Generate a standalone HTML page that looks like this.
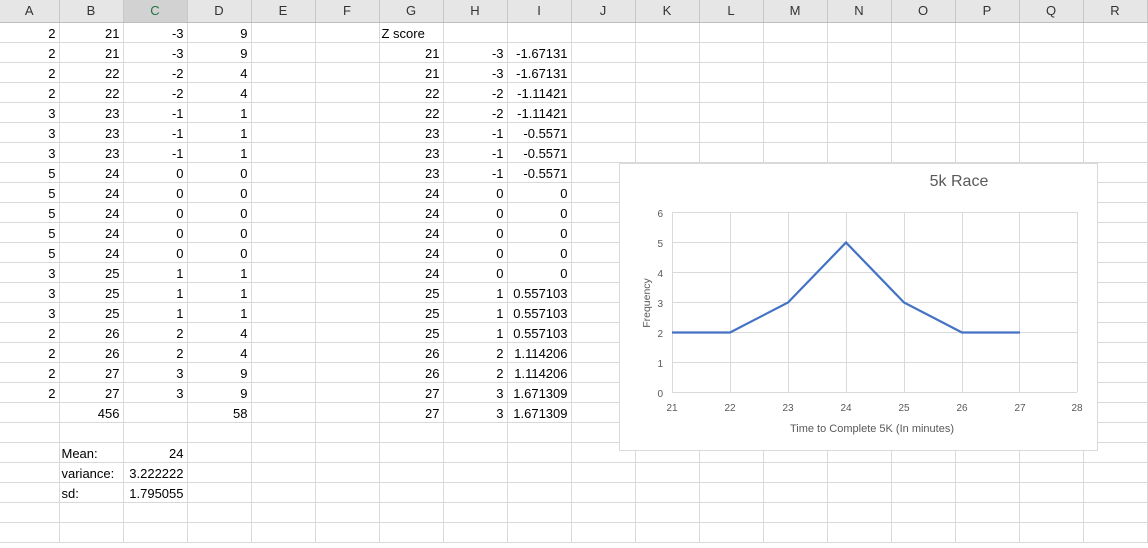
<!DOCTYPE html>
<html><head><meta charset="utf-8"><style>
body{margin:0;width:1148px;height:548px;overflow:hidden;background:#fff;font-family:"Liberation Sans",sans-serif;font-size:13px;color:#000}
table{border-collapse:collapse;table-layout:fixed;position:absolute;left:0;top:0}
td{height:17px;padding:2px 3px 0 2px;border-right:1px solid #d9d9d9;border-bottom:1px solid #d9d9d9;text-align:right;white-space:nowrap;overflow:hidden;line-height:17px}
tr.h td{height:22px;padding:0;background:#e6e6e6;text-align:center;color:#333;border-right:1px solid #c8c8c8;border-bottom:1px solid #bdbdbd;font-size:13px;line-height:22px}
tr.h td.s{background:#d2d2d2;color:#217346}
td.l{text-align:left}
#chart{position:absolute;left:619px;top:163px;width:479px;height:288px;background:#fff;border:1px solid #d9d9d9;box-sizing:border-box}
</style></head><body>
<table>
<colgroup><col style="width:59px"><col span="17" style="width:64px"></colgroup>
<tr class="h"><td>A</td><td>B</td><td class="s">C</td><td>D</td><td>E</td><td>F</td><td>G</td><td>H</td><td>I</td><td>J</td><td>K</td><td>L</td><td>M</td><td>N</td><td>O</td><td>P</td><td>Q</td><td>R</td></tr>
<tr><td>2</td><td>21</td><td>-3</td><td>9</td><td></td><td></td><td class="l">Z score</td><td></td><td></td><td></td><td></td><td></td><td></td><td></td><td></td><td></td><td></td><td></td></tr>
<tr><td>2</td><td>21</td><td>-3</td><td>9</td><td></td><td></td><td>21</td><td>-3</td><td>-1.67131</td><td></td><td></td><td></td><td></td><td></td><td></td><td></td><td></td><td></td></tr>
<tr><td>2</td><td>22</td><td>-2</td><td>4</td><td></td><td></td><td>21</td><td>-3</td><td>-1.67131</td><td></td><td></td><td></td><td></td><td></td><td></td><td></td><td></td><td></td></tr>
<tr><td>2</td><td>22</td><td>-2</td><td>4</td><td></td><td></td><td>22</td><td>-2</td><td>-1.11421</td><td></td><td></td><td></td><td></td><td></td><td></td><td></td><td></td><td></td></tr>
<tr><td>3</td><td>23</td><td>-1</td><td>1</td><td></td><td></td><td>22</td><td>-2</td><td>-1.11421</td><td></td><td></td><td></td><td></td><td></td><td></td><td></td><td></td><td></td></tr>
<tr><td>3</td><td>23</td><td>-1</td><td>1</td><td></td><td></td><td>23</td><td>-1</td><td>-0.5571</td><td></td><td></td><td></td><td></td><td></td><td></td><td></td><td></td><td></td></tr>
<tr><td>3</td><td>23</td><td>-1</td><td>1</td><td></td><td></td><td>23</td><td>-1</td><td>-0.5571</td><td></td><td></td><td></td><td></td><td></td><td></td><td></td><td></td><td></td></tr>
<tr><td>5</td><td>24</td><td>0</td><td>0</td><td></td><td></td><td>23</td><td>-1</td><td>-0.5571</td><td></td><td></td><td></td><td></td><td></td><td></td><td></td><td></td><td></td></tr>
<tr><td>5</td><td>24</td><td>0</td><td>0</td><td></td><td></td><td>24</td><td>0</td><td>0</td><td></td><td></td><td></td><td></td><td></td><td></td><td></td><td></td><td></td></tr>
<tr><td>5</td><td>24</td><td>0</td><td>0</td><td></td><td></td><td>24</td><td>0</td><td>0</td><td></td><td></td><td></td><td></td><td></td><td></td><td></td><td></td><td></td></tr>
<tr><td>5</td><td>24</td><td>0</td><td>0</td><td></td><td></td><td>24</td><td>0</td><td>0</td><td></td><td></td><td></td><td></td><td></td><td></td><td></td><td></td><td></td></tr>
<tr><td>5</td><td>24</td><td>0</td><td>0</td><td></td><td></td><td>24</td><td>0</td><td>0</td><td></td><td></td><td></td><td></td><td></td><td></td><td></td><td></td><td></td></tr>
<tr><td>3</td><td>25</td><td>1</td><td>1</td><td></td><td></td><td>24</td><td>0</td><td>0</td><td></td><td></td><td></td><td></td><td></td><td></td><td></td><td></td><td></td></tr>
<tr><td>3</td><td>25</td><td>1</td><td>1</td><td></td><td></td><td>25</td><td>1</td><td>0.557103</td><td></td><td></td><td></td><td></td><td></td><td></td><td></td><td></td><td></td></tr>
<tr><td>3</td><td>25</td><td>1</td><td>1</td><td></td><td></td><td>25</td><td>1</td><td>0.557103</td><td></td><td></td><td></td><td></td><td></td><td></td><td></td><td></td><td></td></tr>
<tr><td>2</td><td>26</td><td>2</td><td>4</td><td></td><td></td><td>25</td><td>1</td><td>0.557103</td><td></td><td></td><td></td><td></td><td></td><td></td><td></td><td></td><td></td></tr>
<tr><td>2</td><td>26</td><td>2</td><td>4</td><td></td><td></td><td>26</td><td>2</td><td>1.114206</td><td></td><td></td><td></td><td></td><td></td><td></td><td></td><td></td><td></td></tr>
<tr><td>2</td><td>27</td><td>3</td><td>9</td><td></td><td></td><td>26</td><td>2</td><td>1.114206</td><td></td><td></td><td></td><td></td><td></td><td></td><td></td><td></td><td></td></tr>
<tr><td>2</td><td>27</td><td>3</td><td>9</td><td></td><td></td><td>27</td><td>3</td><td>1.671309</td><td></td><td></td><td></td><td></td><td></td><td></td><td></td><td></td><td></td></tr>
<tr><td></td><td>456</td><td></td><td>58</td><td></td><td></td><td>27</td><td>3</td><td>1.671309</td><td></td><td></td><td></td><td></td><td></td><td></td><td></td><td></td><td></td></tr>
<tr><td></td><td></td><td></td><td></td><td></td><td></td><td></td><td></td><td></td><td></td><td></td><td></td><td></td><td></td><td></td><td></td><td></td><td></td></tr>
<tr><td></td><td class="l">Mean:</td><td>24</td><td></td><td></td><td></td><td></td><td></td><td></td><td></td><td></td><td></td><td></td><td></td><td></td><td></td><td></td><td></td></tr>
<tr><td></td><td class="l">variance:</td><td>3.222222</td><td></td><td></td><td></td><td></td><td></td><td></td><td></td><td></td><td></td><td></td><td></td><td></td><td></td><td></td><td></td></tr>
<tr><td></td><td class="l">sd:</td><td>1.795055</td><td></td><td></td><td></td><td></td><td></td><td></td><td></td><td></td><td></td><td></td><td></td><td></td><td></td><td></td><td></td></tr>
<tr><td></td><td></td><td></td><td></td><td></td><td></td><td></td><td></td><td></td><td></td><td></td><td></td><td></td><td></td><td></td><td></td><td></td><td></td></tr>
<tr><td></td><td></td><td></td><td></td><td></td><td></td><td></td><td></td><td></td><td></td><td></td><td></td><td></td><td></td><td></td><td></td><td></td><td></td></tr>
</table>
<div id="chart">
<svg width="479" height="288" viewBox="0 0 479 288" style="position:absolute;left:-1px;top:-1px" font-family="Liberation Sans, sans-serif">
<g stroke="#d9d9d9" stroke-width="1">
<line x1="53" y1="49.5" x2="458" y2="49.5"/><line x1="53" y1="79.5" x2="458" y2="79.5"/><line x1="53" y1="109.5" x2="458" y2="109.5"/><line x1="53" y1="139.5" x2="458" y2="139.5"/><line x1="53" y1="169.5" x2="458" y2="169.5"/><line x1="53" y1="199.5" x2="458" y2="199.5"/><line x1="53" y1="229.5" x2="458" y2="229.5"/>
<line x1="53.5" y1="49" x2="53.5" y2="229"/><line x1="111.5" y1="49" x2="111.5" y2="229"/><line x1="169.5" y1="49" x2="169.5" y2="229"/><line x1="227.5" y1="49" x2="227.5" y2="229"/><line x1="285.5" y1="49" x2="285.5" y2="229"/><line x1="343.5" y1="49" x2="343.5" y2="229"/><line x1="400.5" y1="49" x2="400.5" y2="229"/><line x1="458.5" y1="49" x2="458.5" y2="229"/>
</g>
<polyline fill="none" stroke="#4472c4" stroke-width="2.2" points="53,169.5 111,169.5 169,139.5 227,79.5 285,139.5 343,169.5 401,169.5"/>
<text x="340" y="23" font-size="16" fill="#595959" text-anchor="middle">5k Race</text>
<g font-size="10" fill="#595959" text-anchor="end">
<text x="44" y="54">6</text><text x="44" y="84">5</text><text x="44" y="114">4</text><text x="44" y="144">3</text><text x="44" y="174">2</text><text x="44" y="204">1</text><text x="44" y="234">0</text>
</g>
<g font-size="10" fill="#595959" text-anchor="middle">
<text x="53" y="248">21</text><text x="111" y="248">22</text><text x="169" y="248">23</text><text x="227" y="248">24</text><text x="285" y="248">25</text><text x="343" y="248">26</text><text x="401" y="248">27</text><text x="458" y="248">28</text>
<text x="253" y="269" font-size="11">Time to Complete 5K (In minutes)</text>
<text transform="translate(31,140) rotate(-90)" font-size="10.5">Frequency</text>
</g>
</svg>
</div>
</body></html>
